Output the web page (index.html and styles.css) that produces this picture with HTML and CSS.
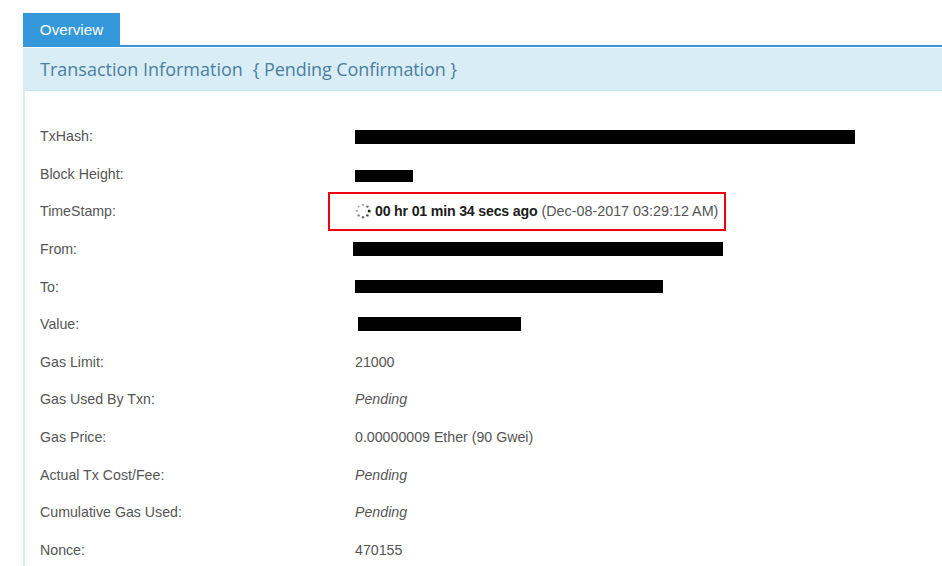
FILE: index.html
```html
<!DOCTYPE html>
<html lang="en">
<head>
<meta charset="utf-8">
<title>Transaction Information</title>
<link rel="stylesheet" href="styles.css">
</head>
<body>
<main class="page">
  <div class="tabs"><div class="tab">Overview</div></div>
  <section class="panel">
    <h2 class="panel-title">Transaction Information<span class="status">{ Pending Confirmation }</span></h2>
    <div class="rows">
      <div class="row"><div class="label">TxHash:</div><div class="value"><span class="redact redact-hash"></span></div></div>
      <div class="row"><div class="label">Block Height:</div><div class="value"><span class="redact redact-block"></span></div></div>
      <div class="row"><div class="label">TimeStamp:</div><div class="value time">
        <svg class="spinner" viewBox="0 0 16 16" width="16" height="16" aria-hidden="true">
          <circle cx="8" cy="1.8" r="1.1" fill="#a8a8a8"/>
          <circle cx="12.4" cy="3.6" r="1.2" fill="#666"/>
          <circle cx="14.2" cy="8" r="1.5" fill="#222"/>
          <circle cx="12.4" cy="12.4" r="1.2" fill="#444"/>
          <circle cx="8" cy="14.2" r="1.2" fill="#666"/>
          <circle cx="3.6" cy="12.4" r="1.2" fill="#808080"/>
          <circle cx="1.8" cy="8" r="1.1" fill="#999"/>
          <circle cx="3.6" cy="3.6" r="1.1" fill="#a8a8a8"/>
        </svg>
        <strong class="age">00 hr 01 min 34 secs ago</strong>
        <span class="when">(Dec-08-2017 03:29:12 AM)</span>
        <span class="highlight"></span>
      </div></div>
      <div class="row"><div class="label">From:</div><div class="value"><span class="redact redact-from"></span></div></div>
      <div class="row"><div class="label">To:</div><div class="value"><span class="redact redact-to"></span></div></div>
      <div class="row"><div class="label">Value:</div><div class="value"><span class="redact redact-value"></span></div></div>
      <div class="row"><div class="label">Gas Limit:</div><div class="value">21000</div></div>
      <div class="row"><div class="label">Gas Used By Txn:</div><div class="value"><em>Pending</em></div></div>
      <div class="row"><div class="label">Gas Price:</div><div class="value">0.00000009 Ether (90 Gwei)</div></div>
      <div class="row"><div class="label">Actual Tx Cost/Fee:</div><div class="value"><em>Pending</em></div></div>
      <div class="row"><div class="label">Cumulative Gas Used:</div><div class="value"><em>Pending</em></div></div>
      <div class="row"><div class="label">Nonce:</div><div class="value">470155</div></div>
    </div>
  </section>
</main>
</body>
</html>
```
FILE: styles.css
```css
html, body {
  margin: 0;
  height: 100%;
  overflow: hidden;
  background: #fff;
}
body {
  font-family: "Liberation Sans", Arial, sans-serif;
  font-size: 14.2px;
  color: #555;
}
.page {
  padding: 13px 0 0 23px;
}
.tabs {
  display: flex;
  border-bottom: 2px solid #3498db;
}
.tab {
  width: 97px;
  height: 32px;
  line-height: 33px;
  text-align: center;
  background: #3498db;
  color: #fff;
  font-size: 15.2px;
}
.panel {
  border-left: 2px solid #d9edf7;
}
.panel-title {
  margin: 1px 0 0;
  height: 43px;
  padding-left: 15px;
  line-height: 42px;
  box-sizing: border-box;
  background: #d9edf7;
  border-bottom: 1px solid #c5e5f3;
  color: #4a7f9f;
  font-family: "Open Sans", "Liberation Sans", sans-serif;
  font-weight: 400;
  font-size: 18px;
}
.status {
  margin-left: 10px;
  letter-spacing: -0.1px;
}
.rows {
  display: grid;
  grid-auto-rows: 37.6px;
  padding-top: 26.5px;
}
.row {
  display: grid;
  grid-template-columns: 315px 1fr;
  padding-left: 15px;
  align-items: center;
}
.value {
  display: flex;
  align-items: center;
  white-space: pre;
}
.value em {
  font-style: italic;
}
.redact {
  display: block;
  background: #000;
}
.redact-hash { width: 500px; height: 14px; margin-top: 1px; }
.redact-block { width: 58px; height: 12px; margin-top: 5px; }
.redact-from { width: 370px; height: 14px; margin-left: -2px; }
.redact-to { width: 308px; height: 13px; }
.redact-value { width: 163px; height: 14px; margin-left: 3px; }
.time {
  position: relative;
}
.spinner {
  margin-right: 4px;
  flex: none;
}
.age {
  color: #1c1c1c;
  font-weight: 700;
  letter-spacing: -0.2px;
}
.when {
  margin-left: 4px;
  font-size: 14.35px;
}
.highlight {
  position: absolute;
  left: -27px;
  top: -11px;
  width: 394px;
  height: 35px;
  border: 2px solid #f0000f;
}
```
